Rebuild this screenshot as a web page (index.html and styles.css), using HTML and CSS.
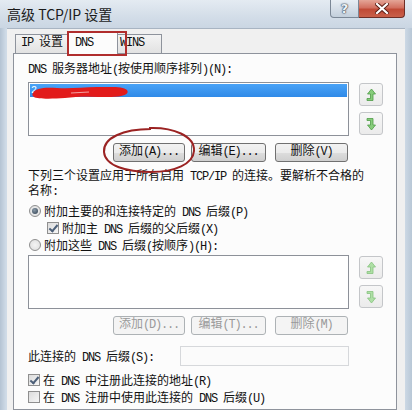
FILE: index.html
```html
<!DOCTYPE html>
<html lang="zh-CN">
<head>
<meta charset="utf-8">
<title>高级 TCP/IP 设置</title>
<link rel="stylesheet" href="styles.css">
</head>
<body>
<div class="window">
  <div class="titlebar">
    <span class="title">高级 TCP/IP 设置</span>
    <div class="caption">
      <span class="cap-help">?</span>
      <span class="cap-close">
        <svg width="14" height="11" viewBox="0 0 14 11"><path d="M2 1 L12 10 M12 1 L2 10" stroke="#5a1d14" stroke-width="4" stroke-linecap="square"/><path d="M2 1 L12 10 M12 1 L2 10" stroke="#ffffff" stroke-width="2.2" stroke-linecap="square"/></svg>
      </span>
    </div>
  </div>
  <div class="client">
    <div class="tabs">
      <div class="tab tab-ip"><span class="a">IP </span>设置</div>
      <div class="tab tab-dns active"><span class="a">DNS</span></div>
      <div class="tab tab-wins"><span class="a">WINS</span></div>
    </div>
    <div class="panel">
      <div class="label"><span class="a">DNS </span>服务器地址<span class="a">(</span>按使用顺序排列<span class="a">)(N):</span></div>
      <div class="listrow">
        <div class="listbox">
          <div class="item sel">2</div>
          <svg class="scribble" width="100" height="16" viewBox="0 0 100 16"><path d="M2 9 C4 4 14 3 26 4 C40 5 52 3 66 3 C80 3 92 2 96 6 C99 10 92 13 80 13 C64 13 48 12 34 14 C20 15 6 15 3 13 C1 12 1 10 2 9 Z" fill="#e21b1b"/><path d="M40 9 L58 8" stroke="#f3a0a0" stroke-width="1.2"/></svg>
        </div>
        <div class="arrows">
          <div class="arrowbtn"><svg width="12" height="14" viewBox="0 0 12 14"><path d="M6.5 1 L10.5 6 L8 6 L8 12.5 L2 12.5 L2 10.5 L5.5 10.5 L5.5 6 L2.5 6 Z" fill="#86cc7a" stroke="#4f9c48" stroke-width="0.8"/></svg></div>
          <div class="arrowbtn"><svg width="12" height="14" viewBox="0 0 12 14"><path d="M6.5 13 L10.5 8 L8 8 L8 1.5 L2 1.5 L2 3.5 L5.5 3.5 L5.5 8 L2.5 8 Z" fill="#86cc7a" stroke="#4f9c48" stroke-width="0.8"/></svg></div>
        </div>
      </div>
      <div class="btnrow">
        <span class="btn w-add">添加<span class="a">(A)...</span></span>
        <span class="btn w-edit">编辑<span class="a">(E)...</span></span>
        <span class="btn w-del">删除<span class="a">(V)</span></span>
      </div>
      <p class="note">下列三个设置应用于所有启用<span class="a"> TCP/IP </span>的连接。要解析不合格的<br>名称<span class="a">:</span></p>
      <div class="opt">
        <span class="radio on"></span><span>附加主要的和连接特定的<span class="a"> DNS </span>后缀<span class="a">(P)</span></span>
      </div>
      <div class="opt indent">
        <span class="check on"></span><span>附加主<span class="a"> DNS </span>后缀的父后缀<span class="a">(X)</span></span>
      </div>
      <div class="opt">
        <span class="radio"></span><span>附加这些<span class="a"> DNS </span>后缀<span class="a">(</span>按顺序<span class="a">)(H):</span></span>
      </div>
      <div class="listrow second">
        <div class="listbox"></div>
        <div class="arrows">
          <div class="arrowbtn dis"><svg width="12" height="14" viewBox="0 0 12 14"><path d="M6.5 1 L10.5 6 L8 6 L8 12.5 L2 12.5 L2 10.5 L5.5 10.5 L5.5 6 L2.5 6 Z" fill="#aedfa5" stroke="#86c37f" stroke-width="0.8"/></svg></div>
          <div class="arrowbtn dis"><svg width="12" height="14" viewBox="0 0 12 14"><path d="M6.5 13 L10.5 8 L8 8 L8 1.5 L2 1.5 L2 3.5 L5.5 3.5 L5.5 8 L2.5 8 Z" fill="#aedfa5" stroke="#86c37f" stroke-width="0.8"/></svg></div>
        </div>
      </div>
      <div class="btnrow">
        <span class="btn dis w-add">添加<span class="a">(D)...</span></span>
        <span class="btn dis w-edit">编辑<span class="a">(T)...</span></span>
        <span class="btn dis w-del">删除<span class="a">(M)</span></span>
      </div>
      <div class="suffix">
        <span>此连接的<span class="a"> DNS </span>后缀<span class="a">(S):</span></span>
        <span class="textbox"></span>
      </div>
      <div class="opt bottom">
        <span class="check on"></span><span>在<span class="a"> DNS </span>中注册此连接的地址<span class="a">(R)</span></span>
      </div>
      <div class="opt bottom">
        <span class="check"></span><span>在<span class="a"> DNS </span>注册中使用此连接的<span class="a"> DNS </span>后缀<span class="a">(U)</span></span>
      </div>
    </div>
  </div>
  <div class="mark-tab"></div>
  <svg class="mark-ellipse" width="96" height="48" viewBox="0 0 96 48"><path d="M48 2 C72 1 94 10 93 25 C92 38 74 46 50 46 C26 46 4 40 3 26 C2 12 22 3 50 3" fill="none" stroke="#9b2323" stroke-width="2"/></svg>
</div>
</body>
</html>
```
FILE: styles.css
```css
* { box-sizing: border-box; }
html, body { margin: 0; padding: 0; }
body {
  width: 412px;
  height: 410px;
  overflow: hidden;
  font-family: "Liberation Mono", "Noto Sans CJK SC", monospace;
  font-size: 12px;
  color: #111;
}
.a {
  font-family: "Liberation Mono", monospace;
  letter-spacing: -1.2px;
}
.window {
  position: relative;
  width: 412px;
  height: 410px;
  overflow: hidden;
  background: linear-gradient(90deg, #b4c3d3 0px, #cfdbe7 6px, #cfdbe7 404px, #b8c7d6 412px);
  display: flex;
  flex-direction: column;
}
.titlebar {
  height: 28px;
  flex: none;
  display: flex;
  align-items: flex-start;
  background: linear-gradient(180deg, #e4ebf2 0%, #d3dde8 60%, #cad6e3 100%);
}
.title {
  font-family: "Noto Sans CJK SC", sans-serif;
  font-size: 14px;
  line-height: 14px;
  margin: 7px 0 0 7px;
  color: #1b1b1b;
}
.caption {
  margin-left: auto;
  margin-right: 7px;
  display: flex;
}
.cap-help {
  width: 29px;
  height: 18px;
  border: 1px solid #7b8796;
  border-top: none;
  border-radius: 0 0 0 4px;
  background: linear-gradient(180deg, #e8eef4, #c3cfdc);
  font-family: "DejaVu Sans", sans-serif;
  font-weight: bold;
  font-size: 13px;
  line-height: 17px;
  text-align: center;
  color: #eef2f6;
  text-shadow: 0 0 1px #3a4656, 0 0 1px #3a4656, 0 0 2px #3a4656;
}
.cap-close {
  width: 46px;
  height: 18px;
  border: 1px solid #6e2e26;
  border-top: none;
  border-left: none;
  border-radius: 0 0 4px 0;
  background: linear-gradient(180deg, #e4a597 0%, #d27060 45%, #c04a36 55%, #c9604a 100%);
  display: flex;
  align-items: center;
  justify-content: center;
}
.client {
  flex: 1;
  margin: 0 7px 0 7px;
  background: #f0f0f0;
  border-top: 1px solid #a8b4c2;
  padding: 2px 8px 0 6px;
  display: flex;
  flex-direction: column;
}
.tabs {
  display: flex;
  align-items: flex-end;
  padding-left: 2px;
  height: 22px;
  flex: none;
}
.tab {
  height: 19px;
  border: 1px solid #8e939c;
  border-bottom: none;
  background: linear-gradient(180deg, #f4f4f4, #e2e2e2);
  line-height: 17px;
  padding-left: 5px;
}
.tab-ip { width: 53px; border-right: none; }
.tab-dns { width: 50px; }
.tab-wins { width: 44px; border-left: none; padding-left: 2px; }
.tab.active {
  height: 23px;
  background: #fcfcfc;
  margin-bottom: -1px;
  position: relative;
  z-index: 1;
  line-height: 22px;
  padding-left: 6px;
}
.panel {
  flex: 1;
  border: 1px solid #8e939c;
  background: #fcfcfc;
  padding: 9px 13px 0 14px;
  display: flex;
  flex-direction: column;
}
.label { line-height: 15px; height: 15px; margin-bottom: 4px; white-space: nowrap; }
.listrow {
  display: flex;
  gap: 10px;
  align-items: flex-start;
}
.listrow.second { margin-top: 2px; }
.listbox {
  position: relative;
  width: 321px;
  height: 54px;
  border: 1px solid #8d9199;
  background: #ffffff;
  padding: 1px;
}
.item.sel {
  height: 13px;
  background: linear-gradient(180deg, #4aa3f7, #2f8ae8);
  color: #fff;
  line-height: 13px;
  padding-left: 1px;
  font-size: 10px;
}
.scribble {
  position: absolute;
  left: 2px;
  top: 1px;
}
.arrows {
  display: flex;
  flex-direction: column;
  gap: 6px;
  padding-top: 1px;
}
.arrowbtn {
  width: 24px;
  height: 23px;
  border: 1px solid #c4c6c9;
  border-radius: 3px;
  background: linear-gradient(180deg, #f7f7f7, #ebebeb);
  display: flex;
  align-items: center;
  justify-content: center;
}
.btnrow {
  display: flex;
  width: 321px;
  justify-content: flex-end;
  margin-top: 7px;
  padding-right: 1px;
}
.btn {
  height: 19px;
  border: 1px solid #707070;
  border-radius: 3px;
  background: linear-gradient(180deg, #f2f2f2 0%, #ebebeb 50%, #dddddd 51%, #cfcfcf 100%);
  text-align: center;
  line-height: 17px;
  white-space: nowrap;
}
.w-add { width: 72px; }
.w-edit { width: 75px; margin-left: 6px; }
.w-del { width: 73px; margin-left: 9px; }
.btn.dis {
  border-color: #adb2b5;
  background: #f4f4f4;
  color: #9a9a9a;
}
.note {
  margin: 8px -20px 2px 0;
  line-height: 15px;
  white-space: nowrap;
}
.opt {
  display: flex;
  align-items: center;
  height: 17px;
  white-space: nowrap;
}
.opt.indent { padding-left: 19px; }
.radio {
  width: 12px;
  height: 12px;
  border-radius: 50%;
  border: 1px solid #8f8f8f;
  background: radial-gradient(circle, #f4f4f4 0%, #dcdcdc 100%);
  margin: 0 3px 0 1px;
  display: flex;
  align-items: center;
  justify-content: center;
  flex: none;
}
.radio.on::after {
  content: "";
  width: 6px;
  height: 6px;
  border-radius: 50%;
  background: radial-gradient(circle at 40% 35%, #8a9aa8, #2c3c4c);
}
.check {
  width: 12px;
  height: 12px;
  border: 1px solid #8f8f8f;
  background: linear-gradient(135deg, #dcdcdc, #f6f6f6);
  margin-right: 3px;
  flex: none;
  position: relative;
}
.check.on::after {
  content: "";
  position: absolute;
  left: 3px;
  top: 0px;
  width: 3px;
  height: 7px;
  border-right: 2px solid #4c5f78;
  border-bottom: 2px solid #4c5f78;
  transform: rotate(40deg);
}
.suffix {
  display: flex;
  align-items: center;
  margin-top: 11px;
  width: 321px;
  justify-content: space-between;
}
.textbox {
  width: 169px;
  height: 20px;
  border: 1px solid #d6d8db;
  background: #fbfbfb;
}
.suffix + .opt.bottom { margin-top: 5px; height: 17px; }
.opt.bottom + .opt.bottom { height: 18px; }
.mark-tab {
  position: absolute;
  left: 67px;
  top: 31px;
  width: 60px;
  height: 25px;
  border: 2px solid #b02d2d;
  z-index: 5;
}
.mark-ellipse {
  position: absolute;
  left: 101px;
  top: 126px;
  z-index: 5;
}
```
